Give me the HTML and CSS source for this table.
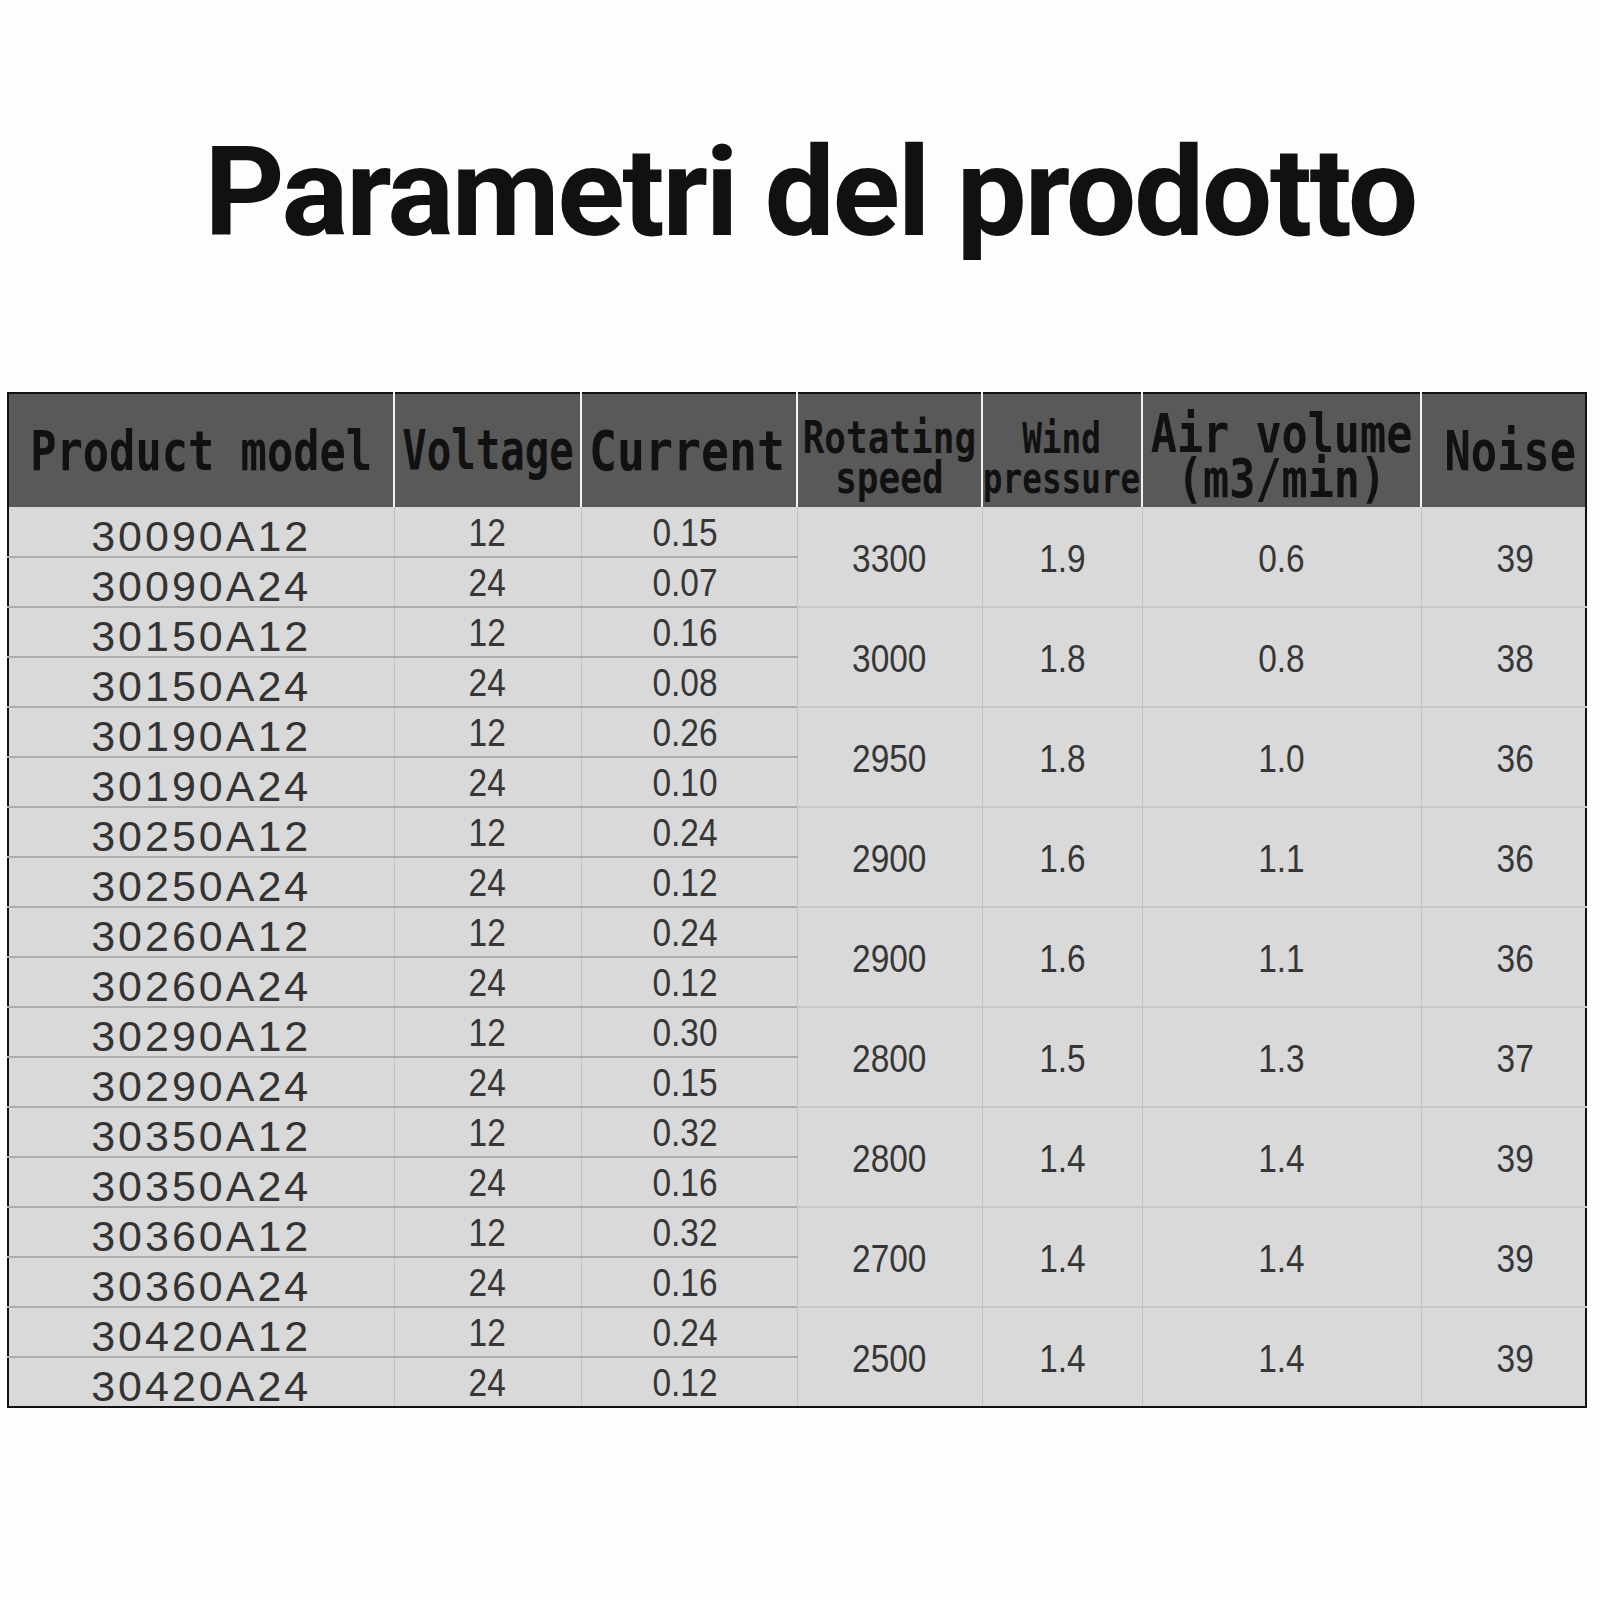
FILE: index.html
```html
<!DOCTYPE html>
<html lang="it">
<head>
<meta charset="utf-8">
<title>Parametri del prodotto</title>
<link rel="stylesheet" href="styles.css">
</head>
<body>
<h1 class="title">Parametri del prodotto</h1>
<table class="spec">
  <colgroup>
    <col class="c1"><col class="c2"><col class="c3"><col class="c4"><col class="c5"><col class="c6"><col class="c7">
  </colgroup>
  <thead>
    <tr>
      <th><span class="h h-model">Product model</span></th>
      <th><span class="h h-volt">Voltage</span></th>
      <th><span class="h h-cur">Current</span></th>
      <th><span class="h h-two h-rot">Rotating<br>speed</span></th>
      <th><span class="h h-two h-wind">Wind<br>pressure</span></th>
      <th><span class="h h-two h-air">Air volume<br>(m3/min)</span></th>
      <th><span class="h h-noise">Noise</span></th>
    </tr>
  </thead>
  <tbody>
    <tr><td class="model"><span>30090A12</span></td><td class="num"><span>12</span></td><td class="num cur"><span>0.15</span></td><td class="num grp" rowspan="2"><span>3300</span></td><td class="num grp" rowspan="2"><span>1.9</span></td><td class="num grp" rowspan="2"><span>0.6</span></td><td class="num grp noise" rowspan="2"><span>39</span></td></tr>
    <tr><td class="model"><span>30090A24</span></td><td class="num"><span>24</span></td><td class="num cur"><span>0.07</span></td></tr>
    <tr><td class="model"><span>30150A12</span></td><td class="num"><span>12</span></td><td class="num cur"><span>0.16</span></td><td class="num grp" rowspan="2"><span>3000</span></td><td class="num grp" rowspan="2"><span>1.8</span></td><td class="num grp" rowspan="2"><span>0.8</span></td><td class="num grp noise" rowspan="2"><span>38</span></td></tr>
    <tr><td class="model"><span>30150A24</span></td><td class="num"><span>24</span></td><td class="num cur"><span>0.08</span></td></tr>
    <tr><td class="model"><span>30190A12</span></td><td class="num"><span>12</span></td><td class="num cur"><span>0.26</span></td><td class="num grp" rowspan="2"><span>2950</span></td><td class="num grp" rowspan="2"><span>1.8</span></td><td class="num grp" rowspan="2"><span>1.0</span></td><td class="num grp noise" rowspan="2"><span>36</span></td></tr>
    <tr><td class="model"><span>30190A24</span></td><td class="num"><span>24</span></td><td class="num cur"><span>0.10</span></td></tr>
    <tr><td class="model"><span>30250A12</span></td><td class="num"><span>12</span></td><td class="num cur"><span>0.24</span></td><td class="num grp" rowspan="2"><span>2900</span></td><td class="num grp" rowspan="2"><span>1.6</span></td><td class="num grp" rowspan="2"><span>1.1</span></td><td class="num grp noise" rowspan="2"><span>36</span></td></tr>
    <tr><td class="model"><span>30250A24</span></td><td class="num"><span>24</span></td><td class="num cur"><span>0.12</span></td></tr>
    <tr><td class="model"><span>30260A12</span></td><td class="num"><span>12</span></td><td class="num cur"><span>0.24</span></td><td class="num grp" rowspan="2"><span>2900</span></td><td class="num grp" rowspan="2"><span>1.6</span></td><td class="num grp" rowspan="2"><span>1.1</span></td><td class="num grp noise" rowspan="2"><span>36</span></td></tr>
    <tr><td class="model"><span>30260A24</span></td><td class="num"><span>24</span></td><td class="num cur"><span>0.12</span></td></tr>
    <tr><td class="model"><span>30290A12</span></td><td class="num"><span>12</span></td><td class="num cur"><span>0.30</span></td><td class="num grp" rowspan="2"><span>2800</span></td><td class="num grp" rowspan="2"><span>1.5</span></td><td class="num grp" rowspan="2"><span>1.3</span></td><td class="num grp noise" rowspan="2"><span>37</span></td></tr>
    <tr><td class="model"><span>30290A24</span></td><td class="num"><span>24</span></td><td class="num cur"><span>0.15</span></td></tr>
    <tr><td class="model"><span>30350A12</span></td><td class="num"><span>12</span></td><td class="num cur"><span>0.32</span></td><td class="num grp" rowspan="2"><span>2800</span></td><td class="num grp" rowspan="2"><span>1.4</span></td><td class="num grp" rowspan="2"><span>1.4</span></td><td class="num grp noise" rowspan="2"><span>39</span></td></tr>
    <tr><td class="model"><span>30350A24</span></td><td class="num"><span>24</span></td><td class="num cur"><span>0.16</span></td></tr>
    <tr><td class="model"><span>30360A12</span></td><td class="num"><span>12</span></td><td class="num cur"><span>0.32</span></td><td class="num grp" rowspan="2"><span>2700</span></td><td class="num grp" rowspan="2"><span>1.4</span></td><td class="num grp" rowspan="2"><span>1.4</span></td><td class="num grp noise" rowspan="2"><span>39</span></td></tr>
    <tr><td class="model"><span>30360A24</span></td><td class="num"><span>24</span></td><td class="num cur"><span>0.16</span></td></tr>
    <tr class="lastgrp"><td class="model"><span>30420A12</span></td><td class="num"><span>12</span></td><td class="num cur"><span>0.24</span></td><td class="num grp" rowspan="2"><span>2500</span></td><td class="num grp" rowspan="2"><span>1.4</span></td><td class="num grp" rowspan="2"><span>1.4</span></td><td class="num grp noise" rowspan="2"><span>39</span></td></tr>
    <tr class="last"><td class="model"><span>30420A24</span></td><td class="num"><span>24</span></td><td class="num cur"><span>0.12</span></td></tr>
  </tbody>
</table>
</body>
</html>
```

FILE: styles.css
```css
html, body {
  margin: 0;
  padding: 0;
  background: #fdfdfd;
  overflow: hidden;
}
body {
  width: 1600px;
  height: 1600px;
  font-family: "Liberation Sans", Arial, sans-serif;
}
.title {
  margin: 0;
  padding: 130px 0 0 20px;
  height: 262px;
  font-family: Roboto, "Liberation Sans", sans-serif;
  font-weight: 700;
  font-size: 125px;
  line-height: 125px;
  letter-spacing: -2.5px;
  text-align: center;
  color: #111;
}
.spec {
  margin-left: 7px;
  width: 1578px;
  border-collapse: collapse;
  table-layout: fixed;
  border: 2px solid #111;
}
.c1 { width: 386px; }
.c2 { width: 187px; }
.c3 { width: 216px; }
.c4 { width: 185px; }
.c5 { width: 160px; }
.c6 { width: 279px; }
.c7 { width: 165px; }

.spec th {
  height: 113px;
  padding: 0;
  background: #595959;
  border-left: 2px solid #f2f2f2;
  color: #111;
  font-family: "DejaVu Sans Mono", "Liberation Mono", monospace;
  font-weight: 700;
  text-align: center;
  vertical-align: middle;
  white-space: nowrap;
}
.spec th:first-child { border-left: none; }
.h {
  display: inline-block;
  transform-origin: center center;
  line-height: 1;
  margin: 0 -80px;
}
.h-model { font-size: 56px; transform: scaleX(0.78); }
.h-volt  { font-size: 55px; transform: scaleX(0.74); }
.h-cur   { font-size: 56px; transform: translateX(-2px) scaleX(0.83); }
.h-noise { font-size: 56px; transform: translateX(7px) scaleX(0.78); }
.h-rot   { font-size: 45px; line-height: 40px; transform: translateY(7px) scaleX(0.80); }
.h-wind  { font-size: 43px; line-height: 40px; transform: translateY(7px) scaleX(0.76); }
.h-air   { font-size: 53px; line-height: 45px; transform: translateY(5px) scaleX(0.82); }

.spec tbody tr { height: 50px; }
.spec td {
  padding: 0;
  background: #d9d9d9;
  border-left: 1px solid #c2c2c2;
  border-bottom: 2px solid #acacac;
  text-align: center;
  vertical-align: middle;
  color: #303030;
  white-space: nowrap;
  font-size: 0;
  line-height: 0;
}
.spec td:first-child { border-left: none; }
.spec td.grp { border-bottom: 2px solid #c6c6c6; }
.spec tr.lastgrp td.grp,
.spec tr.last td { border-bottom: none; }
.spec td span {
  display: inline-block;
  vertical-align: middle;
  line-height: 40px;
}
.model span {
  font-size: 43px;
  line-height: 46px;
  letter-spacing: 3px;
  color: #333;
  transform: translateY(4px);
}
.num span {
  font-size: 38px;
  transform: translateY(1px) scaleX(0.88);
  color: #363636;
}
.cur span { transform: translate(-4px, 1px) scaleX(0.88); }
.grp span { transform: translateY(2px) scaleX(0.88); }
.noise span { margin-left: 24px; }
```
